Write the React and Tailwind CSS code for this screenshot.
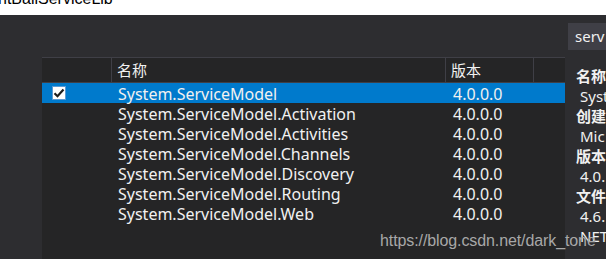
import React from "react";

const rows = [
  "System.ServiceModel",
  "System.ServiceModel.Activation",
  "System.ServiceModel.Activities",
  "System.ServiceModel.Channels",
  "System.ServiceModel.Discovery",
  "System.ServiceModel.Routing",
  "System.ServiceModel.Web",
];

const details = [
  ["名称", "Syst"],
  ["创建", "Mic"],
  ["版本", "4.0."],
  ["文件", "4.6."],
];

export default function App() {
  const font = { fontFamily: '"Noto Sans", "Noto Sans CJK SC", sans-serif' };
  return (
    <div className="relative w-[606px] h-[259px] overflow-hidden bg-[#2d2d30] text-[#f1f1f1]" style={font}>
      <div className="h-[15px] bg-white overflow-hidden">
        <div className="text-[16px] leading-[16px] text-black -mt-[9px] -ml-[2px]" style={{ fontFamily: '"Liberation Sans", sans-serif' }}>
          ntBallServiceLib
        </div>
      </div>
      <div className="flex h-[244px]">
        <div className="w-[42px] shrink-0" />
        <div className="w-[523px] shrink-0 mt-[42px] bg-[#252526] text-[16px]">
          <div className="flex h-[26px] border-t border-[#3f3f46] border-b leading-[24px] text-[15px]">
            <div className="w-[70px] border-r border-[#3f3f46]" />
            <div className="w-[334px] pl-[5px] border-r border-[#3f3f46]">名称</div>
            <div className="w-[88px] pl-[5px] border-r border-[#3f3f46]">版本</div>
            <div className="flex-1" />
          </div>
          {rows.map((r, i) => (
            <div key={r} className={`flex h-[20px] leading-[22px] ${i === 0 ? "bg-[#007acc]" : ""}`}>
              <div className="w-[70px] flex items-center pl-[10px]">
                {i === 0 && (
                  <div className="w-[14px] h-[14px] bg-white border border-[#5b9bd5] flex items-center justify-center">
                    <svg width="12" height="12" viewBox="0 0 12 12">
                      <path d="M1.5 6.2 L4.5 9.2 L10.5 2.5" fill="none" stroke="#1e1e1e" strokeWidth="2.2" />
                    </svg>
                  </div>
                )}
              </div>
              <div className="w-[335px] pl-[6px] whitespace-nowrap">{r}</div>
              <div className="w-[88px] pl-[6px]">4.0.0.0</div>
            </div>
          ))}
        </div>
        <div className="flex-1 pl-[3px] pt-[8px] text-[15px]">
          <div className="h-[27px] bg-[#3f3f46] pl-[7px] leading-[26px] whitespace-nowrap overflow-hidden">serv</div>
          <div className="pl-[8px] pt-[16px] whitespace-nowrap">
            {details.map(([k, v]) => (
              <React.Fragment key={k}>
                <div className="h-[20px] leading-[20px] font-bold">{k}</div>
                <div className="h-[20px] leading-[20px] pl-[4px]">{v}</div>
              </React.Fragment>
            ))}
            <div className="h-[20px] leading-[20px] pl-[4px]">NET</div>
          </div>
        </div>
      </div>
      <div className="absolute left-[380px] top-[229px] text-[16px] tracking-[-0.1px] text-[#a8a8a8] whitespace-nowrap" style={{ fontFamily: '"Liberation Sans", sans-serif' }}>
        https://blog.csdn.net/dark_tone
      </div>
    </div>
  );
}
